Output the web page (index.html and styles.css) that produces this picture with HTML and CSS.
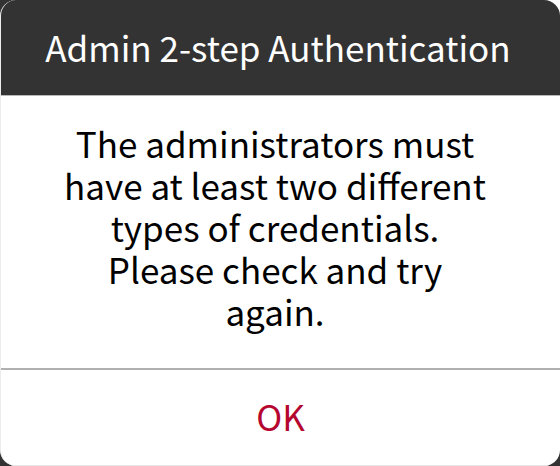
FILE: index.html
```html
<!DOCTYPE html>
<html lang="en">
<head>
<meta charset="utf-8">
<title>Admin 2-step Authentication</title>
<link rel="stylesheet" href="styles.css">
</head>
<body>
<div class="dialog">
  <div class="dialog-header">
    <h1 class="dialog-title">Admin 2-step Authentication</h1>
  </div>
  <div class="dialog-body">
    <p class="dialog-message">The administrators must<br>have at least two different<br>types of credentials.<br>Please check and try<br>again.</p>
  </div>
  <div class="dialog-footer">
    <button class="dialog-button" type="button">OK</button>
  </div>
</div>
</body>
</html>
```

FILE: styles.css
```css
html, body {
  margin: 0;
  padding: 0;
}

body {
  background: linear-gradient(#ffffff, #ffffff) top right / 20px 20px no-repeat, #333333;
  width: 560px;
  height: 466px;
  overflow: hidden;
  font-family: "Noto Sans CJK JP", "Noto Sans", sans-serif;
}

.dialog {
  width: 560px;
  height: 466px;
  box-sizing: border-box;
  background: #ffffff;
  border-radius: 16px;
  overflow: hidden;
  display: flex;
  flex-direction: column;
  border-left: 1px solid #ececec;
}

.dialog-header {
  height: 95px;
  flex: none;
  background: #333333;
  border-bottom: 1px solid #b8b8b8;
  display: flex;
  align-items: center;
  justify-content: center;
  padding-right: 5px;
}

.dialog-title {
  margin: 0;
  color: #ffffff;
  font-size: 35px;
  font-weight: 400;
  line-height: 1;
  padding-bottom: 2px;
}

.dialog-body {
  flex: 1;
  display: flex;
  align-items: center;
  justify-content: center;
  border-bottom: 2px solid #b0b0b0;
  padding-right: 11px;
}

.dialog-message {
  margin: 0;
  color: #000000;
  font-size: 35px;
  font-weight: 400;
  line-height: 42px;
  text-align: center;
  padding-bottom: 10px;
}

.dialog-footer {
  height: 95px;
  flex: none;
  display: flex;
  align-items: center;
  justify-content: center;
  border-bottom: 1px solid #e6e6e6;
}

.dialog-button {
  border: none;
  background: transparent;
  color: #b5072f;
  font-family: inherit;
  font-size: 35px;
  line-height: 1;
  padding: 0 0 4px;
}
```
